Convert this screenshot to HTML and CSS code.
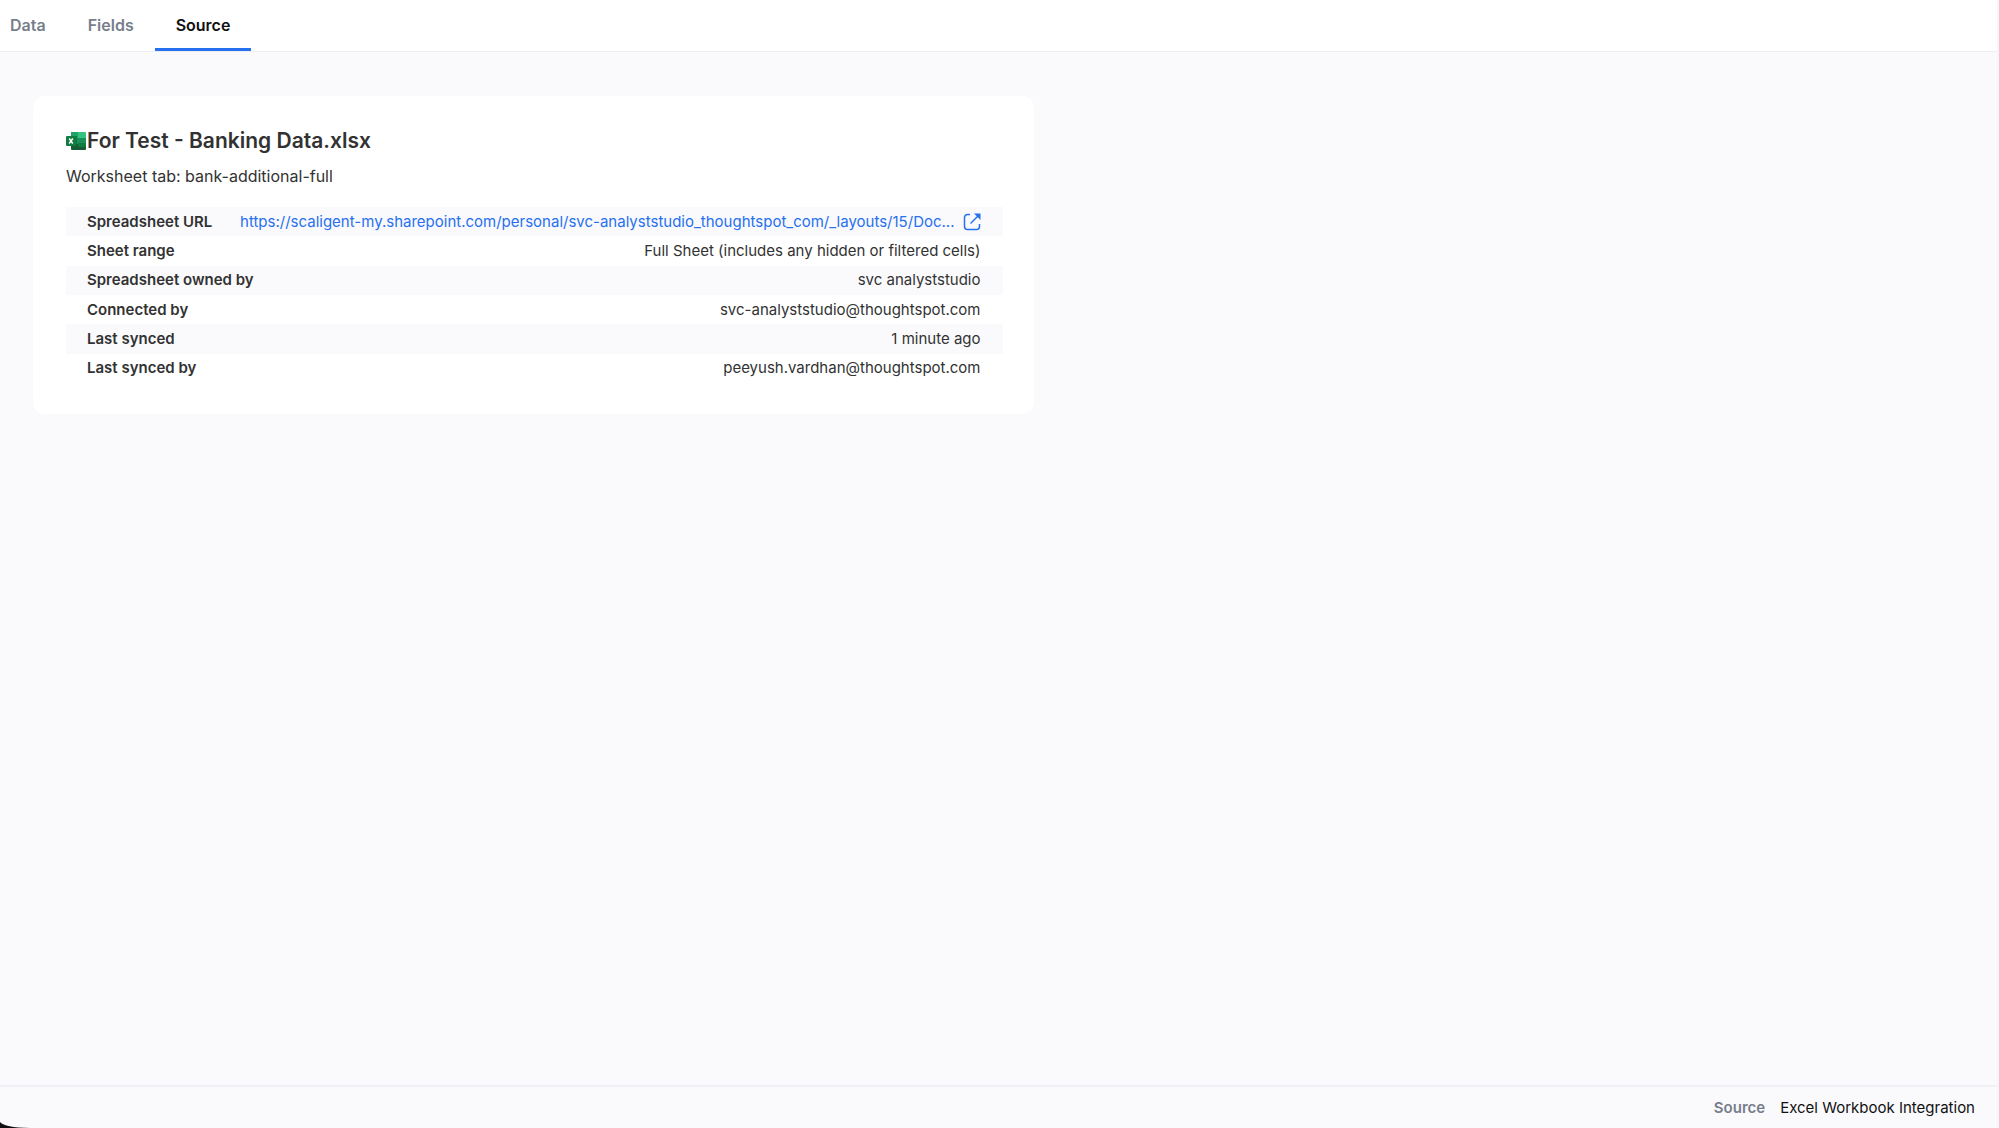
FILE: index.html
```html
<!DOCTYPE html>
<html lang="en">
<head>
<meta charset="utf-8">
<title>Source - For Test - Banking Data.xlsx</title>
<link rel="stylesheet" href="styles.css">
</head>
<body>
<nav class="tabs">
  <a class="tab" href="#data">Data</a>
  <a class="tab" href="#fields">Fields</a>
  <a class="tab tab-active" href="#source" aria-current="page">Source</a>
</nav>
<main class="content">
  <section class="card">
    <h1 class="title">
      <svg class="excel" viewBox="0 0 20 20" aria-hidden="true">
        <path fill="#21a366" d="M5 1h7v6H5z"/>
        <path fill="#33c481" d="M12 1h7a1 1 0 0 1 1 1v5h-8z"/>
        <path fill="#1a9058" d="M5 7h15v6H5z"/>
        <path fill="#185c37" d="M5 13h15v5a1 1 0 0 1-1 1H6a1 1 0 0 1-1-1z"/>
        <path fill="#107c41" d="M12 12h8v4h-8z"/>
        <path fill="#0b6233" d="M5 5h6v11H5z" opacity=".6"/>
        <rect x="0" y="5" width="10" height="10" rx="1" fill="#107c41"/>
        <path stroke="#fff" stroke-width="1.5" d="M3.2 7.5l3.600 5M6.800 7.500l-3.600 5"/>
      </svg>
      <span>For Test - Banking Data.xlsx</span>
    </h1>
    <p class="subtitle">Worksheet tab: bank-additional-full</p>
    <table class="details">
      <tbody>
        <tr>
          <th scope="row">Spreadsheet URL</th>
          <td>
            <a class="link" href="#spreadsheet">
              <span>https://scaligent-my.sharepoint.com/personal/svc-analyststudio_thoughtspot_com/_layouts/15/Doc...</span>
              <svg class="external" viewBox="0 0 18 18" fill="none" stroke="currentColor" stroke-width="1.5" aria-hidden="true">
                <path d="M7 1.500H4.500a3 3 0 0 0-3 3v9a3 3 0 0 0 3 3h9a3 3 0 0 0 3-3V11"/>
                <path d="M7.500 10.500l8-8"/>
                <path fill="currentColor" stroke="none" d="M11 0.500h6.500V7z"/>
              </svg>
            </a>
          </td>
        </tr>
        <tr><th scope="row">Sheet range</th><td>Full Sheet (includes any hidden or filtered cells)</td></tr>
        <tr><th scope="row">Spreadsheet owned by</th><td>svc analyststudio</td></tr>
        <tr><th scope="row">Connected by</th><td>svc-analyststudio@thoughtspot.com</td></tr>
        <tr><th scope="row">Last synced</th><td>1 minute ago</td></tr>
        <tr><th scope="row">Last synced by</th><td>peeyush.vardhan@thoughtspot.com</td></tr>
      </tbody>
    </table>
  </section>
</main>
<footer class="footer">
  <span class="footer-label">Source</span>
  <span>Excel Workbook Integration</span>
</footer>
<svg class="corner" viewBox="0 0 30 6" aria-hidden="true"><path fill="#111" d="M0 0C4 4 12 5.500 30 6H0z"/></svg>
</body>
</html>
```
FILE: styles.css
```css
* { box-sizing: border-box; }

body {
  margin: 0;
  min-height: 100vh;
  display: flex;
  flex-direction: column;
  background: #fafafd;
  border-right: 2px solid #f5f6fa;
  color: #323232;
  font-family: Inter, "Liberation Sans", sans-serif;
  font-size: 15px;
  line-height: 20px;
}

.tabs {
  display: flex;
  height: 52px;
  padding-left: 10px;
  gap: 42px;
  background: #fff;
  border-bottom: 1px solid #eaedf2;
}

.tab {
  padding-top: 15px;
  border-bottom: 3px solid transparent;
  color: #777e8b;
  font-size: 16px;
  font-weight: 600;
  text-decoration: none;
}

.tab-active {
  margin-left: -21px;
  padding-left: 21px;
  padding-right: 21px;
  border-bottom-color: #2770ef;
  color: #111;
}

.content {
  flex: 1;
  padding: 44px 33px;
}

.card {
  width: calc(50% + 35px);
  padding: 32px 31px 31px 33px;
  background: #fff;
  border-radius: 12px;
}

.title {
  display: flex;
  align-items: center;
  margin: 0;
  font-size: 21px;
  font-weight: 600;
  line-height: 26px;
}

.excel {
  width: 20px;
  height: 20px;
  margin-right: 1px;
}

.subtitle {
  margin: 12px 0 21px;
  font-size: 16px;
}

.details { display: block; }

.details tbody {
  display: grid;
  grid-auto-rows: 1fr;
  min-height: 176px;
}

.details tr {
  display: flex;
  justify-content: space-between;
  align-items: center;
  padding: 0 22px 0 21px;
}

.details tr:nth-child(odd) { background: #fafafd; }

.details th {
  padding: 0;
  font-weight: 600;
  white-space: nowrap;
}

.details td { padding: 0; }

.link {
  display: flex;
  align-items: center;
  gap: 8px;
  color: #2770ef;
  text-decoration: none;
}

.external { width: 18px; height: 18px; }

.footer {
  display: flex;
  justify-content: flex-end;
  gap: 15px;
  height: 43px;
  padding: 11px 22px 0;
  border-top: 2px solid #eff1f7;
  color: #111;
}

.footer-label { color: #777e8b; font-weight: 600; }

.corner {
  position: absolute;
  left: 0;
  bottom: 0;
  width: 30px;
  height: 6px;
}
```
